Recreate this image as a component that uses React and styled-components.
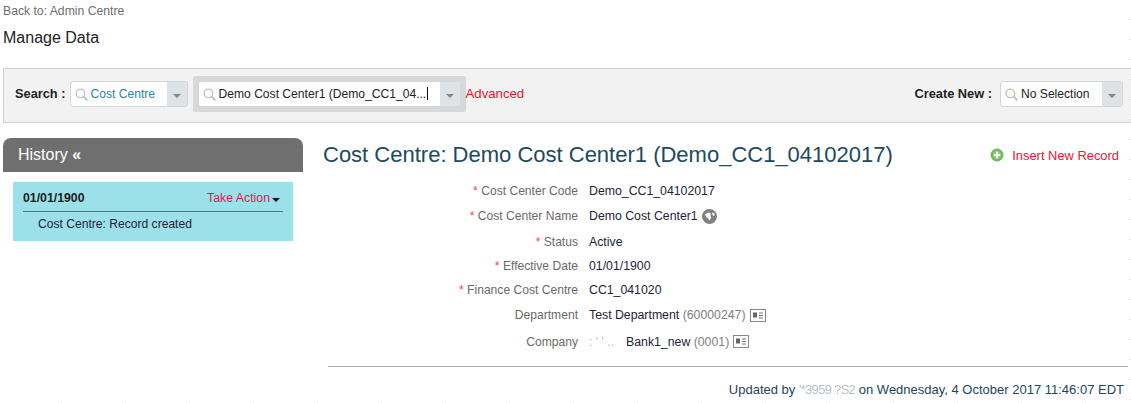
import React from "react";
import styled, { createGlobalStyle } from "styled-components";

const GlobalStyle = createGlobalStyle`
  html, body {
    margin: 0;
    padding: 0;
    background: #fff;
    overflow: hidden;
  }
  body {
    font-family: "Liberation Sans", Arial, sans-serif;
    font-size: 12.3px;
    color: #222;
  }
`;

const rows = [
  { label: "Cost Center Code", value: "Demo_CC1_04102017", required: true, height: 25 },
  { label: "Cost Center Name", value: "Demo Cost Center1", required: true, globe: true, height: 26 },
  { label: "Status", value: "Active", required: true, height: 25 },
  { label: "Effective Date", value: "01/01/1900", required: true, height: 24 },
  { label: "Finance Cost Centre", value: "CC1_041020", required: true, height: 23 },
  { label: "Department", value: "Test Department", code: "(60000247)", card: true, height: 28 },
  { label: "Company", value: "Bank1_new", code: "(0001)", card: true, masked: true, height: 25 },
];

const SearchIcon = () => (
  <SearchSvg viewBox="0 0 14 14" fill="none" stroke="#bfc3c3" strokeWidth="1.5">
    <circle cx="5.8" cy="5.8" r="4.6" />
    <path d="M9.200 9.200l4 4" strokeWidth="2.2" />
  </SearchSvg>
);

const PlusIcon = () => (
  <svg width="14" height="14" viewBox="0 0 14 14">
    <circle cx="7" cy="7" r="6.5" fill="#6dbb5f" />
    <circle cx="7" cy="7" r="4.2" fill="#8ccb7c" />
    <path d="M7 3.8v6.4M3.8 7h6.4" stroke="#fff" strokeWidth="2" />
  </svg>
);

const GlobeIcon = () => (
  <svg width="15" height="15" viewBox="0 0 15 15">
    <circle cx="7.5" cy="7.5" r="7.5" fill="#808080" />
    <path d="M3 5.2 6.4 3.6 9 4.6 8.4 6.8 9.2 8.6 7.4 12 6.2 9.6 4.4 8.2zM9.8 3.6l2.4.6.6 2-1.6.8z" fill="#fff" />
  </svg>
);

const CardIcon = () => (
  <svg width="16" height="13" viewBox="0 0 16 13" fill="none">
    <rect x="0.5" y="0.5" width="15" height="12" fill="#fff" stroke="#888" />
    <rect x="3" y="3.5" width="4" height="5" fill="#666" />
    <path d="M9 4h4M9 6.500h4M9 9h4" stroke="#777" />
  </svg>
);

const Combo = ({ value, tone, width }) => (
  <ComboBox $width={width}>
    <ComboField>
      <SearchIcon />
      <ComboText $tone={tone}>{value}</ComboText>
    </ComboField>
    <ComboArrow />
  </ComboBox>
);

const App = () => (
  <Page>
    <GlobalStyle />
    <BackLink>Back to: Admin Centre</BackLink>
    <PageTitle>Manage Data</PageTitle>

    <Toolbar>
      <SearchGroup>
        <BarLabel>Search :</BarLabel>
        <Combo value="Cost Centre" tone="#2f7fa8" width={118} />
        <Highlight>
          <ComboBox $width={263}>
            <ComboField>
              <SearchIcon />
              <ComboText>
                Demo Cost Center1 (Demo_CC1_04...
                <Caret />
              </ComboText>
            </ComboField>
            <ComboArrow />
          </ComboBox>
        </Highlight>
        <RedLink>Advanced</RedLink>
      </SearchGroup>
      <CreateGroup>
        <BarLabel>Create New :</BarLabel>
        <Combo value="No Selection" width={123} />
      </CreateGroup>
    </Toolbar>

    <Columns>
      <Sidebar>
        <HistoryHeader>
          History <b>«</b>
        </HistoryHeader>
        <HistoryCard>
          <HistoryTop>
            <HistoryDate>01/01/1900</HistoryDate>
            <ActionLink>
              Take Action
              <DownCaret />
            </ActionLink>
          </HistoryTop>
          <HistoryNote>Cost Centre: Record created</HistoryNote>
        </HistoryCard>
      </Sidebar>

      <Main>
        <MainHeader>
          <RecordTitle>Cost Centre: Demo Cost Center1 (Demo_CC1_04102017)</RecordTitle>
          <InsertLink>
            <PlusIcon />
            <span>Insert New Record</span>
          </InsertLink>
        </MainHeader>

        <Fields>
          {rows.map((row) => (
            <FieldRow key={row.label} $height={row.height}>
              <FieldLabel>
                {row.required && <Star>* </Star>}
                {row.label}
              </FieldLabel>
              <FieldValue>
                {row.masked && <Masked>: ' ' ..</Masked>}
                {row.value}
                {row.code && <Code> {row.code}</Code>}
                {row.globe && <GlobeIcon />}
                {row.card && <CardIcon />}
              </FieldValue>
            </FieldRow>
          ))}
        </Fields>

        <Footer>
          Updated by <MaskedId>'*3959 ?S2</MaskedId> on Wednesday, 4 October 2017 11:46:07 EDT
        </Footer>
      </Main>
    </Columns>
  </Page>
);

const Page = styled.div`
  position: relative;
  width: 1131px;
  height: 403px;
  overflow: hidden;

  /* faint dotted edge along the bottom and right of the capture */
  &::after {
    content: "";
    position: absolute;
    left: 0;
    right: 0;
    bottom: 0;
    height: 1px;
    background: repeating-linear-gradient(
      to right,
      transparent 0 61px,
      #d4d4d4 61px 62px,
      transparent 62px 64px
    );
  }

  &::before {
    content: "";
    position: absolute;
    top: 0;
    bottom: 0;
    right: 0;
    width: 1px;
    z-index: 1;
    background: repeating-linear-gradient(
      to bottom,
      transparent 0 19px,
      #d4d4d4 19px 20px
    );
  }
`;

const BackLink = styled.div`
  margin: 4px 0 0 3px;
  height: 14px;
  line-height: 14px;
  font-size: 12.2px;
  color: #6e6e6e;
`;

const PageTitle = styled.h1`
  margin: 11px 0 0 3px;
  height: 18px;
  line-height: 18px;
  font-size: 16px;
  font-weight: 400;
  color: #222;
`;

const Toolbar = styled.div`
  box-sizing: border-box;
  display: flex;
  align-items: center;
  justify-content: space-between;
  height: 55px;
  margin: 21px 0 0 3px;
  padding: 0 8px 3px 11px;
  background: #f2f2f2;
  border: 1px solid #cdd2d2;
  border-right: 0;
`;

const SearchGroup = styled.div`
  display: flex;
  align-items: center;
`;

const CreateGroup = styled.div`
  display: flex;
  align-items: center;
  gap: 4px;
`;

const BarLabel = styled.span`
  margin: 0 4px 2px 0;
  font-size: 12.8px;
  font-weight: 700;
  color: #222;
`;

const ComboBox = styled.div`
  box-sizing: border-box;
  display: flex;
  width: ${(p) => p.$width}px;
  height: 26px;
  background: #fff;
  border: 1px solid #d0d6d9;
  border-radius: 3px;
`;

const ComboField = styled.div`
  display: flex;
  flex: 1;
  align-items: center;
  gap: 3px;
  min-width: 0;
  padding-left: 4px;
`;

const SearchSvg = styled.svg`
  flex: none;
  width: 13px;
  height: 13px;
`;

const ComboText = styled.span`
  font-size: 12.1px;
  white-space: nowrap;
  color: ${(p) => p.$tone || "#222"};
`;

const ComboArrow = styled.div`
  position: relative;
  flex: none;
  width: 20px;
  background: #dfe3e5;

  &::after {
    content: "";
    position: absolute;
    left: 6px;
    top: 12px;
    border: 4px solid transparent;
    border-top: 4px solid #7f8a8a;
  }
`;

const Highlight = styled.div`
  display: flex;
  align-items: center;
  height: 36px;
  margin-left: 5px;
  padding: 0 5px;
  background: #d8d8d8;
  border-radius: 2px;
`;

const Caret = styled.span`
  display: inline-block;
  width: 1px;
  height: 13px;
  margin-left: 1px;
  vertical-align: -2px;
  background: #111;
`;

const RedLink = styled.span`
  margin-bottom: 2px;
  font-size: 13.2px;
  color: #e8162f;
`;

const Columns = styled.div`
  display: flex;
  margin-top: 15px;
`;

const Sidebar = styled.aside`
  flex: none;
  width: 300px;
  margin-left: 3px;
`;

const HistoryHeader = styled.div`
  box-sizing: border-box;
  height: 34px;
  padding-left: 15px;
  line-height: 33px;
  font-size: 16px;
  color: #fff;
  background: #706f70;
  border-radius: 8px 8px 0 0;
`;

const HistoryCard = styled.div`
  box-sizing: border-box;
  height: 59px;
  margin: 10px 10px 0;
  padding: 0 10px;
  background: #9ce0ea;
`;

const HistoryTop = styled.div`
  box-sizing: border-box;
  display: flex;
  align-items: center;
  justify-content: space-between;
  height: 30px;
  padding-top: 3px;
  border-bottom: 1px solid #44778a;
`;

const HistoryDate = styled.span`
  font-weight: 700;
  color: #1c1c1c;
`;

const ActionLink = styled.span`
  display: flex;
  align-items: center;
  gap: 2px;
  margin-right: 3px;
  color: #e3174f;
`;

const DownCaret = styled.span`
  width: 0;
  height: 0;
  margin-top: 3px;
  border: 4px solid transparent;
  border-top-color: #111;
  border-bottom-width: 0;
`;

const HistoryNote = styled.div`
  padding: 4px 0 0 15px;
  line-height: 16px;
  font-size: 12.1px;
  color: #232336;
`;

const Main = styled.main`
  flex: 1;
  min-width: 0;
  padding-left: 20px;
`;

const MainHeader = styled.div`
  display: flex;
  align-items: center;
  justify-content: space-between;
  height: 34px;
  padding-right: 12px;
`;

const RecordTitle = styled.h2`
  margin: 0;
  font-size: 22px;
  font-weight: 400;
  color: #1d4a60;
`;

const InsertLink = styled.div`
  display: flex;
  align-items: center;
  gap: 8px;
  font-size: 12.9px;
  color: #e8162f;
`;

const Fields = styled.div`
  margin-top: 6px;
`;

const FieldRow = styled.div`
  display: flex;
  align-items: center;
  gap: 11px;
  height: ${(p) => p.$height}px;
`;

const FieldLabel = styled.div`
  flex: none;
  width: 255px;
  text-align: right;
  font-size: 12.1px;
  color: #6a6a6a;
`;

const Star = styled.span`
  color: #f04a4a;
`;

const FieldValue = styled.div`
  display: flex;
  align-items: center;
  white-space: pre;
  color: #232336;

  svg {
    margin-left: 4px;
  }
`;

const Code = styled.span`
  color: #808080;
`;

const Masked = styled.span`
  width: 37px;
  color: #b8b8c8;
  filter: blur(0.6px);
`;

const MaskedId = styled.span`
  letter-spacing: -0.7px;
  color: #b5bfc6;
  filter: blur(0.5px);
`;

const Footer = styled.div`
  box-sizing: border-box;
  height: 36px;
  margin: 12px 3px 0 5px;
  padding-right: 4px;
  line-height: 46px;
  text-align: right;
  font-size: 13px;
  color: #24455a;
  border-top: 1px solid #aaa;
`;

export default App;
